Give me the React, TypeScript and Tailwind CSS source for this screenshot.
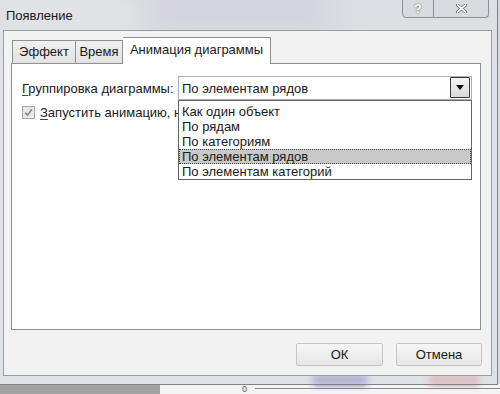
import React from "react";

const items = [
  "Как один объект",
  "По рядам",
  "По категориям",
  "По элементам рядов",
  "По элементам категорий",
];

export default function App() {
  const font = { fontFamily: '"Liberation Sans", Arial, sans-serif' };
  return (
    <div
      className="relative w-[500px] h-[394px] overflow-hidden bg-[#d8dbe0] text-[13px] text-[#1a1a1a]"
      style={font}
    >
      {/* blurred desktop behind the glass frame */}
      <div className="absolute left-[130px] top-[-20px] w-[230px] h-[60px] rounded-full bg-[#b9b3cc] blur-[18px] opacity-80" />
      <div className="absolute left-[0px] top-[0px] w-[140px] h-[30px] bg-[#dedede] blur-[10px]" />
      <div className="absolute left-[330px] top-[-10px] w-[170px] h-[40px] bg-[#d2d5db] blur-[12px]" />

      {/* desktop strip at the bottom */}
      <div className="absolute left-0 top-[384px] w-[500px] h-[10px] flex">
        <div className="w-[160px] h-full bg-[#a2a2a2]" />
        <div className="flex-1 h-full bg-[#f4f4f4] relative">
          <span className="absolute left-[82px] top-[0px] text-[9px] leading-[10px] text-[#555]">0</span>
          <div className="absolute left-[95px] top-[4px] w-[245px] h-px bg-[#8a8a8a]" />
        </div>
      </div>
      <div className="absolute left-[312px] top-[375px] w-[56px] h-[10px] rounded-full bg-[#5046a8] blur-[3px] opacity-80" />
      <div className="absolute left-[428px] top-[375px] w-[52px] h-[10px] rounded-full bg-[#d0605a] blur-[3px] opacity-70" />

      {/* window frame */}
      <div className="relative flex flex-col w-[498px] h-[385px] border-r border-b border-[#7e8288] bg-[#e2e4e8]/60">
        {/* title bar */}
        <div className="relative h-[30px] flex items-center pl-[6px]">
          <span className="text-[13px] text-[#1a1a1a] leading-none">Появление</span>
          <div className="absolute right-[8px] top-[-1px] flex h-[19px]">
            <div className="w-[32px] h-full border border-[#8b8f97] rounded-bl-[4px] bg-[#d3d5db]/50 flex items-center justify-center text-white text-[12px] font-bold [text-shadow:0_0_2px_#444]">
              ?
            </div>
            <div className="w-[55px] h-full border border-l-0 border-[#8b8f97] rounded-br-[4px] bg-[#d3d5db]/50 flex items-center justify-center">
              <svg width="11" height="9" viewBox="0 0 11 9">
                <path d="M1.5 1 L9.5 8 M9.5 1 L1.5 8" stroke="#555" strokeWidth="3" strokeLinecap="round" />
                <path d="M1.5 1 L9.5 8 M9.5 1 L1.5 8" stroke="#fff" strokeWidth="1.8" strokeLinecap="round" />
              </svg>
            </div>
          </div>
        </div>

        {/* client area */}
        <div className="ml-[3px] w-[489px] h-[346px] border border-[#999ca2] bg-[#f2f2f2] flex flex-col pt-[6px] pl-[7px] pr-[9px]">
          {/* tabs */}
          <div className="flex items-end h-[26px] pl-[1px]">
            <div className="w-[64px] h-[23px] border border-b-0 border-[#8e8f91] bg-[linear-gradient(#f0f0f0,#e2e2e2)] flex items-center justify-center">
              Эффект
            </div>
            <div className="w-[47px] h-[23px] border border-b-0 border-l-0 border-[#8e8f91] bg-[linear-gradient(#f0f0f0,#e2e2e2)] flex items-center justify-center">
              Время
            </div>
            <div className="relative z-10 w-[148px] h-[27px] mb-[-1px] border border-b-0 border-l-0 border-[#8e8f91] bg-white flex items-center justify-center pb-[2px]">
              Анимация диаграммы
            </div>
          </div>

          {/* panel */}
          <div className="w-[470px] h-[267px] border border-[#8e8f91] bg-white pt-[12px] pl-[10px] pr-[7px]">
            <div className="flex items-center h-[24px]">
              <div className="w-[156px] leading-none">
                <span className="underline underline-offset-2 decoration-[#444]">Г</span>руппировка диаграммы:
              </div>
              <div className="relative w-[294px] h-[24px] border border-[#abadb3] bg-white flex items-center pl-[3px]">
                <span className="leading-none">По элементам рядов</span>
                <div className="absolute right-[1px] top-[0px] w-[20px] h-[21px] border border-[#3a3a3a] rounded-[1px] bg-[linear-gradient(#f4f4f4,#dadada)] flex items-center justify-center">
                  <svg width="8" height="5" viewBox="0 0 8 5">
                    <path d="M0 0 L8 0 L4 5 Z" fill="#111" />
                  </svg>
                </div>
                {/* dropdown list */}
                <div className="absolute left-[-1px] top-[23px] z-20 w-[294px] h-[80px] border border-[#646464] bg-white pt-[3px]">
                  {items.map((t, i) => (
                    <div
                      key={t}
                      className={
                        i === 3
                          ? "h-[15px] flex items-center pl-[2px] bg-[#c9c9c9] border border-dotted border-[#444] leading-none"
                          : "h-[15px] flex items-center pl-[3px] leading-none"
                      }
                    >
                      {t}
                    </div>
                  ))}
                </div>
              </div>
            </div>

            <div className="flex items-center mt-[6px] h-[13px]">
              <div className="w-[13px] h-[13px] border border-[#a6a6a6] bg-[#e9e9e9] flex items-center justify-center">
                <svg width="9" height="9" viewBox="0 0 9 9">
                  <path d="M1.2 4.6 L3.6 7.2 L7.8 1.2" stroke="#8a8a8a" strokeWidth="1.6" fill="none" />
                </svg>
              </div>
              <span className="ml-[5px] leading-none whitespace-nowrap">
                <span className="underline underline-offset-2 decoration-[#444]">З</span>апустить анимацию, нарисовав фон диаграммы
              </span>
            </div>
          </div>

          {/* buttons */}
          <div className="flex justify-end gap-[13px] mt-[13px]">
            <div className="w-[87px] h-[23px] border border-[#c5c5c5] rounded-[2px] bg-[linear-gradient(#f6f6f6,#e6e6e6)] flex items-center justify-center">
              ОК
            </div>
            <div className="w-[86px] h-[23px] border border-[#c5c5c5] rounded-[2px] bg-[linear-gradient(#f6f6f6,#e6e6e6)] flex items-center justify-center">
              Отмена
            </div>
          </div>
        </div>
      </div>
    </div>
  );
}
